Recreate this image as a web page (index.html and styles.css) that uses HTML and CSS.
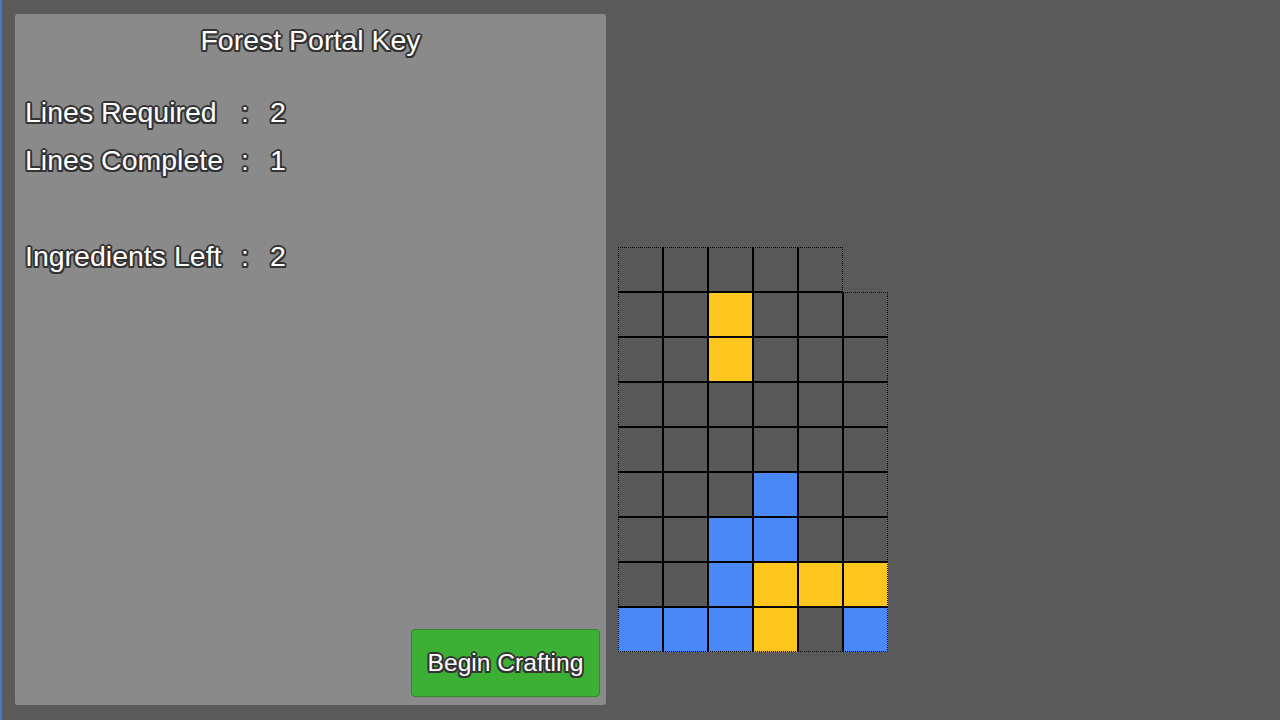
FILE: index.html
```html
<!DOCTYPE html>
<html>
<head>
<meta charset="utf-8">
<link rel="stylesheet" href="styles.css">
</head>
<body>
<div class="panel">
  <div class="title">Forest Portal Key</div>
  <div class="stats">
    <div class="row"><span class="label">Lines Required</span><span class="colon">:</span><span class="val">2</span></div>
    <div class="row"><span class="label">Lines Complete</span><span class="colon">:</span><span class="val">1</span></div>
    <div class="row"></div>
    <div class="row"><span class="label">Ingredients Left</span><span class="colon">:</span><span class="val">2</span></div>
  </div>
  <button class="craft">Begin Crafting</button>
</div>
<div class="grid">
  <div class="c t l"></div><div class="c t"></div><div class="c t"></div><div class="c t"></div><div class="c t r"></div><div class="none"></div>
  <div class="c l"></div><div class="c"></div><div class="c y"></div><div class="c"></div><div class="c"></div><div class="c t r"></div>
  <div class="c l"></div><div class="c"></div><div class="c y"></div><div class="c"></div><div class="c"></div><div class="c r"></div>
  <div class="c l"></div><div class="c"></div><div class="c"></div><div class="c"></div><div class="c"></div><div class="c r"></div>
  <div class="c l"></div><div class="c"></div><div class="c"></div><div class="c"></div><div class="c"></div><div class="c r"></div>
  <div class="c l"></div><div class="c"></div><div class="c"></div><div class="c b"></div><div class="c"></div><div class="c r"></div>
  <div class="c l"></div><div class="c"></div><div class="c b"></div><div class="c b"></div><div class="c"></div><div class="c r"></div>
  <div class="c l"></div><div class="c"></div><div class="c b"></div><div class="c y"></div><div class="c y"></div><div class="c y r"></div>
  <div class="c l d b"></div><div class="c d b"></div><div class="c d b"></div><div class="c d y"></div><div class="c d"></div><div class="c d r b"></div>
</div>
</body>
</html>
```
FILE: styles.css
```css
html, body {
  margin: 0;
  padding: 0;
}
body {
  width: 1280px;
  height: 720px;
  box-sizing: border-box;
  background: #5a5a5a;
  border-left: 2px solid #3c7dc2;
  padding: 14px 0 0 13px;
  display: flex;
  align-items: flex-start;
  overflow: hidden;
  font-family: "Liberation Sans", Arial, sans-serif;
}
.panel {
  width: 591px;
  height: 691px;
  box-sizing: border-box;
  background: #8a8a8a;
  border-radius: 3px;
  display: flex;
  flex-direction: column;
  padding: 2px 6px 8px 10px;
  color: #fff;
  font-size: 28.5px;
}
.title, .row, .craft {
  text-shadow: -1px -1px 0 #333, 1px -1px 0 #333, -1px 1px 0 #333, 1px 1px 0 #333,
    0 -2px 0 #333, 0 2px 0 #333, -2px 0 0 #333, 2px 0 0 #333,
    -1.5px -1.5px 0 #333, 1.5px -1.5px 0 #333, -1.5px 1.5px 0 #333, 1.5px 1.5px 0 #333;
}
.title {
  text-align: center;
  line-height: 48px;
  height: 48px;
  padding-right: 4px;
}
.stats {
  margin-top: 24px;
}
.row {
  display: flex;
  height: 48px;
  line-height: 48px;
}
.label {
  width: 216px;
}
.colon {
  width: 29px;
}
.craft {
  margin-top: auto;
  align-self: flex-end;
  width: 189px;
  height: 68px;
  background: #3cb034;
  border: 1px solid #2e8a28;
  border-radius: 4px;
  color: #fff;
  font-family: "Liberation Sans", Arial, sans-serif;
  font-size: 24.6px;
  padding: 0;
}
.grid {
  margin-left: 12px;
  margin-top: 233px;
  display: grid;
  grid-template-columns: repeat(6, 45px);
  grid-auto-rows: 45px;
}
.c {
  box-sizing: border-box;
  border: 1px solid #000;
  background: #595959;
}
.c.t { border-top: 1px dotted #000; }
.c.l { border-left: 1px dotted #000; }
.c.r { border-right: 1px dotted #000; }
.c.d { border-bottom: 1px dotted #000; }
.c.y { background: #fec61e; }
.c.b { background: #4a88f8; }
```
